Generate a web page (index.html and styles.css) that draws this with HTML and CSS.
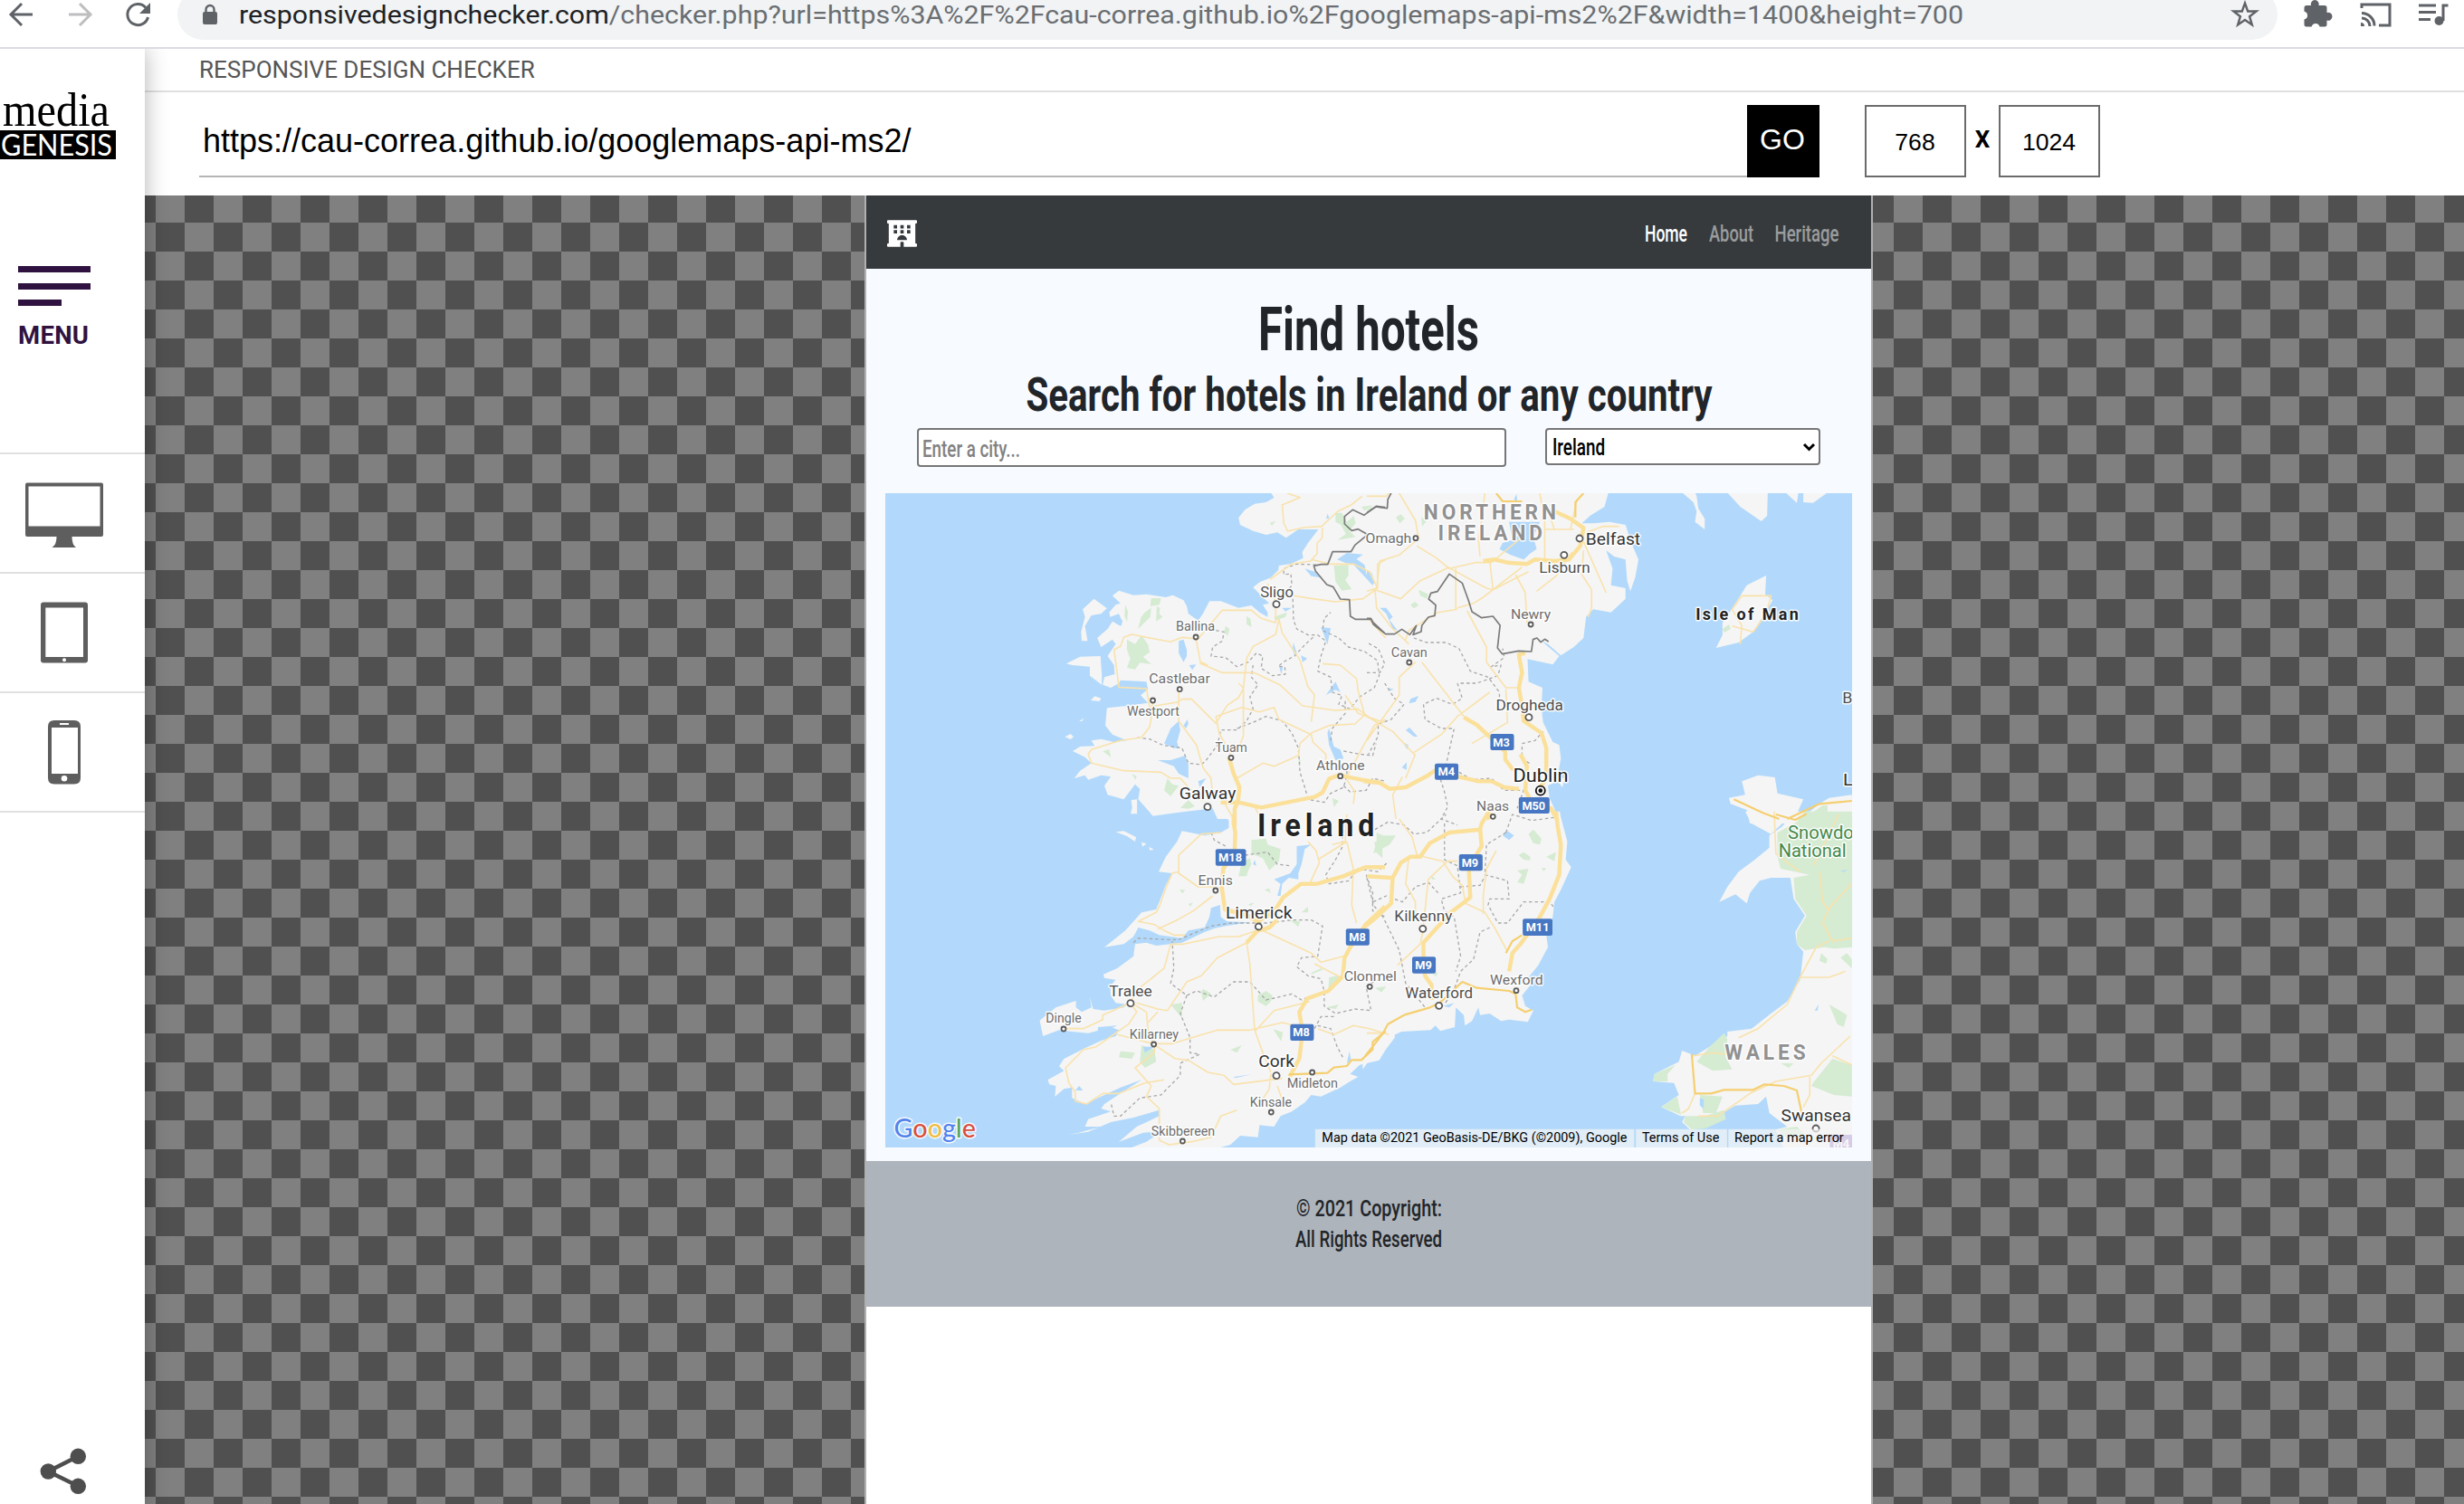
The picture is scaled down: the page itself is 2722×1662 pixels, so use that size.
FILE: index.html
```html
<!DOCTYPE html>
<html lang="en">
<head>
<meta charset="utf-8">
<title>Responsive Design Checker</title>
<link rel="stylesheet" href="styles.css">
</head>
<body>
<header class="browser">
  <svg class="nav-icons" width="196" height="52" fill="none" stroke="#5f6368" stroke-width="3">
    <path d="M36 16H13M24 4L12 16l12 12"/>
    <path stroke="#bdbec0" d="M76 16h23M88 4l12 12-12 12"/>
    <path d="M161 8.500A11.500 11.500 0 1 0 163.500 19"/>
    <path fill="#5f6368" stroke="none" d="M166 3v12h-12z"/>
  </svg>
  <div class="omnibox">
    <svg class="lock" width="18" height="24" viewBox="0 0 18 24"><path d="M4.500 10V6.500a4.500 4.500 0 0 1 9 0V10" fill="none" stroke="#5f6368" stroke-width="2.400"/><rect x="1" y="9" width="16" height="14" rx="2" fill="#5f6368"/></svg>
    <svg class="address" width="1906" height="44"><text y="26" textLength="1905" lengthAdjust="spacingAndGlyphs">responsivedesignchecker.com<tspan class="path">/checker.php?url=https%3A%2F%2Fcau-correa.github.io%2Fgooglemaps-api-ms2%2F&amp;width=1400&amp;height=700</tspan></text></svg>
    <svg class="star" width="32" height="32" viewBox="0 0 32 32"><path d="M16 3.500l3.200 9h9.300l-7.400 5.700 2.700 9.200L16 22l-7.800 5.400 2.700-9.200-7.400-5.700h9.300z" fill="none" stroke="#5f6368" stroke-width="2.400"/></svg>
  </div>
  <svg class="tools" width="206" height="52" fill="#5f6368">
    <path d="M32 6h5a4.500 4.500 0 1 1 8.500 0H52a2.500 2.500 0 0 1 2.500 2.500V14a4.500 4.500 0 1 1 0 8.500V27a2.500 2.500 0 0 1-2.500 2.500h-5.500a4.500 4.500 0 0 0-8.800 0H32a2.500 2.500 0 0 1-2.500-2.500v-5.500a4.500 4.500 0 0 0 0-8.800V8.500A2.500 2.500 0 0 1 32 6z"/>
    <g fill="none" stroke="#5f6368" stroke-width="3"><path d="M93 9V5h31v23h-12M93 14.500a14 14 0 0 1 14 14M93 20a9 9 0 0 1 9 9"/><path d="M156 6h19M156 13.500h19M156 21.500h13M183 23V6h5.500"/></g>
    <path d="M92 25a4 4 0 0 1 4 4h-4z"/><circle cx="178.500" cy="23" r="5"/>
  </svg>
</header>

<div class="app">
  <aside class="sidebar">
    <div class="logo">
      <svg class="media" width="128" height="42"><text x="3" y="37" textLength="118" lengthAdjust="spacingAndGlyphs">media</text></svg>
      <svg class="genesis" width="128" height="32"><text x="1" y="27.500" textLength="123" lengthAdjust="spacingAndGlyphs">GENESIS</text></svg>
    </div>
    <div class="menu"><i></i><i></i><i class="short"></i><span>MENU</span></div>
    <div class="device"><svg width="160" height="130"><path fill-rule="evenodd" d="M30 31.500h82q2 0 2 2V89q0 2-2 2H79.500q0 9 4.500 12H57.500q5-3 5-12H30q-2 0-2-2V33.500q0-2 2-2zM31.500 35.500v44h79v-44z"/></svg></div>
    <div class="device"><svg width="160" height="130"><path fill-rule="evenodd" d="M48 31.500h46q3 0 3 3v61q0 3-3 3H48q-3 0-3-3v-61q0-3 3-3zM50.300 37.500v54.500h41.700V37.500z"/><circle cx="71" cy="95.200" r="2" fill="#fff"/></svg></div>
    <div class="device"><svg width="160" height="130"><path fill-rule="evenodd" d="M60 30h22q7 0 7 7v56.500q0 7-7 7H60q-7 0-7-7V37q0-7 7-7zM57 38v51h29V38z"/><rect x="66" y="33" width="10" height="2" fill="#fff"/><circle cx="71" cy="94.300" r="3.300" fill="#fff"/></svg></div>
    <div class="share"><svg width="160" height="60" fill="#4e4e4e"><path d="M86.300 12.300l-33 16.700 33 16.300" fill="none" stroke="#4e4e4e" stroke-width="4.600"/><circle cx="53.300" cy="29" r="8.700"/><circle cx="86.300" cy="12.300" r="8.700"/><circle cx="86.300" cy="45.300" r="8.700"/></svg></div>
  </aside>

  <main class="main">
    <div class="title">RESPONSIVE DESIGN CHECKER</div>
    <div class="bar">
      <div class="url">https://cau-correa.github.io/googlemaps-api-ms2/</div>
      <div class="go">GO</div>
      <div class="dim">768</div><b class="by">X</b><div class="dim">1024</div>
    </div>
    <div class="stage">
      <div class="frame">
        <nav class="navbar">
          <svg class="hotel" width="33" height="30" viewBox="0 0 576 512" fill="#fff" fill-rule="evenodd"><path d="M560 64c9 0 16-7 16-16V16c0-9-7-16-16-16H16C7 0 0 7 0 16v32c0 9 7 16 16 16h16v384H16c-9 0-16 7-16 16v32c0 9 7 16 16 16h240v-80c0-9 7-16 16-16h32c9 0 16 7 16 16v80h240c9 0 16-7 16-16v-32c0-9-7-16-16-16h-16V64zM128 96h64v64h-64zM256 96h64v64h-64zM384 96h64v64h-64zM128 192h64v64h-64zM256 192h64v64h-64zM384 192h64v64h-64zM192 384a96 96 0 0 1 192 0z"/></svg>
          <svg class="narrow on" width="47" height="81"><text y="51" textLength="47" lengthAdjust="spacingAndGlyphs">Home</text></svg>
          <svg class="narrow" width="49" height="81"><text y="51" textLength="49" lengthAdjust="spacingAndGlyphs">About</text></svg>
          <svg class="narrow" width="71" height="81"><text x="-.5" y="51" textLength="71" lengthAdjust="spacingAndGlyphs">Heritage</text></svg>
        </nav>
        <section class="content">
          <h1><svg width="1110" height="110"><text x="433" y="89.500" textLength="244" lengthAdjust="spacingAndGlyphs">Find hotels</text></svg></h1>
          <h2><svg width="1110" height="66"><text x="176.500" y="46.500" textLength="758" lengthAdjust="spacingAndGlyphs">Search for hotels in Ireland or any country</text></svg></h2>
          <div class="form">
            <div class="city"><svg width="640" height="39"><text x="4" y="29.500" textLength="108" lengthAdjust="spacingAndGlyphs">Enter a city...</text></svg></div>
            <div class="country"><svg width="300" height="36"><text x="6" y="28.300" textLength="58" lengthAdjust="spacingAndGlyphs">Ireland</text><path d="M284 16l5.500 5.500L295 16" fill="none" stroke="#000" stroke-width="3"/></svg></div>
          </div>
          <svg class="map" width="1068" height="723" viewBox="978 545 1068 723">
            <defs>
              <ellipse id="t" rx="7" ry="7.500"/>
              <ellipse id="c" rx="10" ry="10.500"/>
            </defs>
            <rect x="978" y="545" width="1068" height="723" fill="#b2d9fb"/>
            <g transform="translate(970 535) scale(.357143 .333333)">
              <g class="land">
                <path d="M1215 28l10 17-25 15-35 5-30 20-20 27 5 23 40 20 40 13 35-8 27 18 38-28h30l32 0-32 45-18 30 3 20-40 20-35 5-2 15-23 25-35 15-20 17 25 28 25 25-20 5 15 25v15l-25-15-25-23-40 8-55-22h-35l-20 42-15 22-30-22-5-25-10-20-33-17-22 7-60-10-40 3-45-15-20 17 25 25-15 5-20 25 3 15 27-10 10 25-5 15-25-15-15 25-32 30 12 30 35-25 10 15-25 40 20 30 2 30-32 10-5 25 25 10 25-15 5-10 80 5 5 25-23 20 23 25-65 10-62 7-5 58 22 30 45 20-40 5-40-10-30 5 10 18-45 2-23 15 38 20 20 20-35 25-18 25 33-10 10 15 40-15 30 5-20 30 10 30 50 15 35-50 15 15-5 35 45 55 70-10 115-15 15 35H1560V28z"/>
                <path d="M668 380l40 32-18 18-30 5-20 35 8 50h-18l-2-30 12-50-7-25zM582 595l43-23 63-2 4 60v35l-37-30v-30l-55-5zM658 717l12-14 20 7-5 10zM578 838l17-10 10 10-10 8zM783 1048l18-3v48h-20l5-20zM622 785l15-9-6 10z"/>
                <path transform="translate(0 1095)" d="M1060-10l25 30v25l-25 15-50 10-20-5-50-10-15 35-35 50-22 50 42 5-20 40-20 55-10 25-45 10-25 30-25 30-65 55 60-10 30-25 15-30 35 10 30 15 70 10 20-25 50-10 15-35 5-30 28-10 2 40 20 15 70 3-75 12-35 8-30 12-70 35-35 5-45 5-30-10-35 5-5 40-50 40-43 20 3 12 35 6-17 22 2 30 15 25 35 5-10 10-60 10-35-5-10-40 5 35-30 15-18-15v-22l-62 22-50 43 10 52 50-20 40 5 50 5 70-20 25 10-10 20-45 15-50 25-65 35-15 25 15 15-50 30 5 15 20 5-3 35 28-25 25-5v35l40 20 60-30 50-25 65-25-65 45-50 35-10 15 30 10-70 25-10 25 50 0-70 20-33 7 63-10 70-32 70-15 80-25v20l-70 35-55 50 75-30 60-5-50 35-60 25h270l50-15 30-30 55 5 5-40 45 5 20-35 35-15 40-30 20-25 30 5 60-30 30-20 25-15-25-10 30-30 60-15 20-35 28-40V-10z"/>
                <path transform="translate(0 1095)" d="M735 58l25-3 38 20-3 15-25-18zM815 92l15 5-12 10zM838 108l15 8-12 3z"/>
                <g transform="translate(1512 0)">
                  <path d="M-10 28H747l-12 47-45 30-25 25 35 0 50-5 50 10 20 65 20 50-10 60-15 45-10-35-5-70-35-10-25-20 20 60-5 55 45 10v35l-45 45-55-10-22 25-8 70-30 30-40 28-40-38-20-10 55 50-20 28-78-18 3 75 43 20-3 65 5 50 30 65 20 10 5 45-10 60 22 5-7 30-15-20-30 15 5 40 25 60v20H-10z"/>
                  <path d="M975 28l35 32 10 30-5 35 30 25v-35l-20-35-5-40-5-12zM1115 28l40 47 65 48 18-18 2-77zM1295 28l35 34 5-34zM1350 28v32l30 2 45-34zM1235 303l-3 62 23 20-25 45-35 60-45 35-70 18 20-43v-40l25-40 30-50 20-35zM1120 1040l50-10-10-45 50-20 52 7 8 53 80 20-25 60-20 20h-120l-10-45-50-20zM1500 1030l-70 10-30 20-70 60h172z"/>
                </g>
                <g transform="translate(1512 1095)">
                  <path d="M-10-10H597l3 20 20 80-5 60 17 25-32 75-20 40-5 50-20 60 5 40-30 60-30 40 10 20-30 40 10 35 25 15-17 38-58-8-25 5-35-25-30 5-5-25-20 45-22 15-3-35-25-25-3 65-45 13-15-18-15 15-90 5-50 25-25 15 25 10-15 35-35 10-20 30z"/>
                  <path d="M1170-10l20 40 60 35 40-40 20-35zM1325-10l-40 50-40 30v40l-45 40-50 40-35 50-25 50 50-25 35 30 10-35 30-40 35-10h60l10 70 35 55-30 55 5 40 20 25-10 95-40 70-50 40-60 50-75 10v15l-55 35-45 30-40-17-10 37-75 40-5 25 65 5 15 40-55 40 60 30h15l-10 20 25 25 110-35-10-20 40-25 70-5 25-25 10 55 55 45-35 10 25 65h212V-10z"/>
                </g>
              </g>
              <!-- parks and forests -->
              <g class="park">
                <path d="M845 378l30 0-5 22-28 5zM765 400l8 22-3 35-8-20zM825 425l20-15-3 30-38 40 10-40zM862 405l10 5-2 20 10 10-20 15zM770 515l25 15 20-28 20 30 5 25-20 15 25 25-35-5-15 22-25-5 10-30-10-30zM1140 437l12 10 3 27-15-10zM1075 470l12 10-5 22-12-10zM1225 440l40-15-5 15-30 12zM1410 270l45-2 0 35-10 15 20 30-30 5-20-30zM1415 95l20 0 15 30 22-20 5 25-20 25 20 20-55 10 25-20-15-30-17-10zM695 885l20-5 5 25zM895 975l15 20 20 5-25 35-20-20zM935 1073l25-25 20 20-20 8zM1405 1040l20 10-15 20zM785 960l15 8-4 12zM1495 75l35-5-25 18zM1300 885l8 40-6 10zM1212 128l18-5-12 15z"/>
                <path transform="translate(0 1095)" d="M1140 165l-10-10 20-10 5 20-10 20-5 20-25 0 10-45zM1155 85l45-5 5 20 40 15-5 40-30 30-20-40-35-15zM1195 250l15-5 5 15zM1270 250l12 7-12 8zM1275 350l30 5-5 18zM1310 325l20-20 0 20zM1395 540l25-5 15 15-30 30h-12zM1175 600l25-15 20 15-5 20-15 15-25-15zM905 630l35-5 0 50zM1000 590l5-12 25 15-25 25zM745 805l5-20 45 5-10 20zM815 765l40 15 5 40-35 20-15-20zM1222 712l30 10-5 30zM1090 780l35-15-15 25zM1385 640l40-10-10 15zM1340 525l30-15 5 5-35 15zM1535 90l25 5 0 50-20-20zM932 250l18 0-8 12zM960 297l14-5-8 14zM1145 298l18-6-10 12z"/>
                <g transform="translate(1512 0)"><path d="M90 110l15-10 12 15-15 15zM168 110l18 10-15 20zM160 350l30 15-5 15-20-10zM135 400l15-10 10 12-15 10zM0 85l15-10 5 8-18 8zM1100 480l20-15 5 15-20 12zM1350 1110l60-45 15 0 0 45z"/></g>
                <g transform="translate(1512 1095)"><path d="M500 65l15-15 25 30-5 20-20-5zM470 135l15-10 20 15 0 12-20-2zM465 185l35-5-15 50-20-5 15-25zM555 140l30-15-5 30zM540 178l15 0-8 10zM30 60l20 10 40 0-20 30-50 30 10-40zM198 200l15 15-12 0zM25 575l35-5-15 20zM205 530l15-8-5 15zM1355-10h150V440l-60 5-30-5-60 10-25-20 0-40 30-55-35-55-5-70 50-10-90-20-10-40 0-80 60-35zM1060 770l45-45 10 20-5 60 20 40-60 5-50-30zM890 860l65-30-25 30 0 25-45 0zM910 970l50-35 12 60zM1380 890l60-80 60 20v105l-55-5-70-30zM1430 630l25 15 30 20-10 40-20-10zM1405 460l20 20-5 15-20-10zM1465 475l20-15 15 20 0 30zM985 1000l60 0 60-20 5 30-60 30-45 5-25-25zM1030 930l70 5-20 55-40 0zM1270 1045l60-10 30 30-60 10zM1280 825l40 0-15 15z"/></g>
              </g>
              <!-- lakes and inlets -->
              <g class="lake">
                <path d="M930 520l15-5 10 35 0 20-10 20-15-30zM962 600l22-2-12 18zM1370 475l30 2-10 55-10-30zM1285 525l10 35-5 10-8-20zM1308 568l20 10-15 12zM1385 700l30-45 15 35-15-8zM1420 250l30-22 50 5-20 15 25 20 5 30 25 20-5 18-30-35-30-35-25-5zM1320 280l30 10 20 20-30-5zM885 860l20-50 25-25 5 30-10 40 5 20-15 0zM865 915l40 0 45-15 10 30 0 45-30-15-15-25zM1395 810l15 60 20 10 10 30-25 5-20-50-5-40zM945 800l12-20 3 15-8 15zM1390 98l6 15-10 2zM1250 410l30 0-20 12zM1240 600l12 10-5 20zM735 445l18 25 3-20zM990 985l25-10-20 30z"/>
                <path transform="translate(0 1095)" d="M1295 105l45-5-20 15-10 50-10 30 0 20-30-5-20 20-5 40-10 0 10-40-20-15 50-20 20-30zM820 770l35 0-30 20zM1160 165l5-15 5 20zM610 915l12-15 12 15zM1100 870l55-8-50 12zM680 705l60-5-60 30zM1450 825l8-40 5 30z"/>
                <g transform="translate(1512 0)"><path d="M410 215l10-20 30-10-10-60 95 0-20 50 10 40-20 15-20 20-40-15zM455 50l8-18 2 25zM0 285l15 10 10 35-15-5-10-25zM40 410l20 0 20 30-10 10 25 35-15-5-20-50zM65 675l18 5-10 5zM135 712l25-10-10 20-20 5zM120 815l12-8 25 30-12 0zM110 855l18 10-3 15zM108 940l15-18 0 25z"/></g>
                <g transform="translate(1512 1095)"><path d="M420 70l15-15 20 15-15 15zM235 635l35-10-15 15zM1030 940l12 5 0 30-12-10zM1385 650l12-20-3 20zM1465 187l22-4-12 8z"/></g>
              </g>
              <!-- county lines -->
              <g class="county">
                <path d="M1355 267l-60-2-40 15 0 20 22-3 3 40-15 15M1283 380l2 70 10 30 35 20 30 0 25 20-15 50-10 50 40 20 5 50 30 10-10 30 35 15 30-40 45-30 15-40-5-50-40-30-50-15-30-30-50-25 5-40 20-20M1045 485l25 5-5 30-30 20-5 30 45 5 35 30 35-15 25-30 20 10-5 40 35 25 40-5-2-25-20 0 15-15 35-20 30-35 30-30M1160 600l-5 40 20 25-25 40 10 40-20 40-30 30-50 0-10 50-35 50-15 15-40-5-20-50-60-10-40-20-40-5M1110 810l50-20 40-20 50 15 30 40 20 50 5 80 15 50 10 40 50 10 20-30 40-20 10-40 0-25M1400 850l5-40 40-50 0-50M1440 885l50 10 40 5 10-40M1440 1000l20 20 50-5 20-40 40 10"/>
                <path transform="translate(0 1095)" d="M1030 60l10 25 35 20M1135 135l70-10 30 40 40 5M1340 0l-10 60M1440 30l-5 80-20 40-30 50 10 30 60-10 30-40 60 10 30-30M1510 200l20 60 0 60 40 20M790 425l15-15 90 5 35 0 100-45 60-10h110l80-10h60l35 20-15 100-50 5-15 30 35 30 40 10 10 40 0 50 35 25 60-15 50 5-10-50-5-30 30-20h60M1345 600l-35 15-30-20-80 20-50-60-50 0-60 50-55-20-30 15-50-40 10-50-5-90M955 600l-20 60 30 80 0 50 30 5-60 30 0 40-60 65-65 10-60 60-20 0-10-45M1360 700l40 10 20 60 20 40M1350 710l20-40 40 0"/>
                <g transform="translate(1512 0)"><path d="M0 625l40 0 15-30-20-50-35-20M145 510l40 15 60 0 40 20 35 75 55 20 35 50 0 20M280 660l15 50-30 20-50-20-40 20 5 50 50 30 40 0-25 120-20 40 15 50 10 50-20 40 50 20M55 660l30 50 30 20-40 50-40 15 0 40-30 60M290 660l50 0 65-25 10-35-30 5 40-30-5-30M480 860l40-10 25-30M480 870l0 40 30 20M285 955l40 25 60-5 40 40 60 0-20 60M0 980l35 10"/></g>
                <g transform="translate(1512 1095)"><path d="M25 50l40-25 50 10 30 30 40-5 60-60M240 30l0 120 40 20 10 90-60 20 10 40 30 20 20 130-15 50M0 210l20 90 30 40 50 110 20 110 60 80M20 290l40-20 50 20 40-50 40-15 30 35M430 60l-60 40-5 100 70 20 5 60-60 0-5 20 30 60 30 0 50-70 80 0 15 20M380 375l-30 15-20 90-40 40-20 60-30 50M290 240l60-5 15-30M430 60l20-60 60 20 70-10"/></g>
              </g>
              <!-- regional roads -->
              <g class="road">
                <path d="M1265 30l40 14-55 25 5 60 12 27 50-12 55-4 50-50 40-20 35-30M1375 145l-2 35-15 15 0 35-20 25-60 10-65 50M1340 250l60 15h70l50 25 25 55-45 35-85 10-70-10-60-10M1545 345v-80l25-15M1205 330l25 60 0 70-45-15-30-27h-90l-40 50-35 45-50-5-35 15-50-10-70-15-25 10-10 30-20 10 15 125 85 5 10 60 85-15 15-10 30 0 75 80 35-60 35-25 15-30 10-100 20-40 70-40 10-50 10 45 55 90 25 90 20 25-10 90M983 510l15 85 65 30h100l80 40 70 70 100 15 70-5 60 45M1000 590l20 10M930 690l0 95 55 80 20 75 25 35 5 60M850 715l-5 60-5 30-25 35-65 10-90 30-10 15 10 30 100 25 115 5 30 20 30 0 25 30 45 45M1115 660l15 15v160l-20 55M1045 770l80-30 55 15 45-15 15 40 100 50 5 25 40 40 0 30M1045 770l10 55 35 70M1110 975l80-50 35 10 75-35 5-40 35-35 55-25 80-5 30-30-20-80-5-40-50-45-55-5M1450 970l85-170 35-20M1445 700l40 60 80 30M1520 450l50 60M1070 1055l30 55M1165 1070l20 40M1450 980l25 40-5 40"/>
                <path transform="translate(0 1095)" d="M1060 60l-60 5-70 70v60l60 45 50 0M930 190l-20 5-20 50-20 60-10 20-55 30 50 10 30 20 30 15 35 0M865 380l60-30 50-30 60-50M905 430h40l110-25 60 0 70-25M905 430l-20 80-70 60-35 50M1180 380l160 80 30 30 70-20M1350 495l90 50M1140 425l10 70 15 220 20 60 30 80M1140 425l-90 50-50 60-45 20-60 95-30-5-65-20M780 625l20 30-25 40-100 75-40 10-55 60 10 50 20 30 0 30 35 10 50-35 50 0 80-35 60-10M780 625l-85 40 0 15-60 30-60 0M785 625l45 30 5 60 15 45 70 50 40 5 60 40 50 10 30 30 150-20M740 730l110 30h60l60-20 80-25 100 0 100-25 60 15M835 690l30-35M855 765l0 25-60 50 50 60-15 35 40 40 0 105 30 15 70-10 60-15 30-70 50-20M1165 720l60-70 110-30M1215 860l-5 50-30 50M1360 710l50 20 60-30 50 10 60 20M1405 100l40-10 5-90M1450 90l20 90-5 120 15 60M1330 90l25 30 10 40-30 70M1360 150l90-60M1255 960l-20-60"/>
                <g transform="translate(1512 0)"><path d="M0 40l60 0 10-10M100 30l50 90 10 60-60 55-60 20-10 90-30 10M155 205l60 40 40 35 80-20 50 0 90-80M255 275l-90 45-60 60-80-30 5 60 50 70 50 50M250 275l120 70 20 5 110-60M275 280v135M280 415l-60 10-90 60-10 30M150 590l-50 50 0 60-60 90-40 60M170 590l130 180M280 410l50-15 30-20 120-100M310 420l60 120 0 50 60 85h45M430 680l5 110-110 70M380 690l-100 80-50 60-85 60M0 770l80 50 70 80M150 895l-30 80M350 240l-5-60 10-60 10-90M380 250l10 100M460 300l30 60 5 100M525 355l60-50 50-80M550 150l80 0 20-100M535 30l15 90 0 130M555 70l25 80 60 0M670 220l-5 80 30 50 0 60-10 30M670 190l70 170M680 160l50-20 50 0M1130 470l65 20 40-60 15-60-30 0-60 0-30 45 30 55-5 60M90 1110l-10-80 30-60"/></g>
                <g transform="translate(1512 1095)"><path d="M100 15l40 60 15 60 80 20 30 50 30 30 10 60 60 30 30 50 40 80M280 155l-30 0-60 60-15 150M175 380l-10 50-70 70M130 140l-10 90 30 60 0 40M400 120l-30 60-10 90 0 60M0 725l50 0M1260-10l5 140 75 60M1460 0l-80 170M1400 190l10 100 20 30M1500 230l-70 80-20 50 30 60 60-10M1430 420l-40 20-50 100-40 90-90 80-60 30M1340 540l90 0 50-20M1110 795l-40-5-60 10M1015 925l-20 50-20 15M1025 1000l60 0 100-75 80-40 110-20 30-40 90-90M1370 870l0 60-20 40M1440 800l60 30"/></g>
              </g>
              <!-- motorways -->
              <g class="mway">
                <path d="M1085 905l15 55 18 45-5 50-10 20v60M1115 1055l70 17 95-20 70-15 25-15 20-45 30-12 70 15 60 10M1060 1055h55"/>
                <path transform="translate(0 1095)" d="M1100 0v30l5 30-2 60-35 60-5 60 10 75 70 20 30 20 50-30 30-50 55-45 50 0 80-25 70-30h60M1140 425l35-40 35-10 25-25M1568 305l-60 60-50 80-15 30-5 60-45 50-65 25-25 45 10 65-10 90-30 60"/>
                <g transform="translate(1512 0)"><path d="M-10 985l50 5 30 20 50-5 70-40 20-15 75 20 60 15h40l40 20 45 5M300 773l40 25 60 60 28 30 0 25 25 35M580 90l50 25 40 30-10 60-35 45-45 5-60-5-25 15-60-5-40-10-35 5M490 560l-20 5 10 60-10 50 10 60 5 50 55 40 15 50 0 100-25 40M475 895l20 40-5 80 20 40 60 20 20 40M390 1095l-20 15"/></g>
                <g transform="translate(1512 1095)"><path d="M390-30l-35 60-5 20-95 10-60 35-30 45-30 0-30 20-20 40-5 10-80-5M80 205l-5 90-50 50-35 30M350 45l5 60-40 70 5 100-60 50-60 70-25 30 0 40 5 70 20 30 0 50M585-10l5 50 10 60-5 100-30 80-30 60-60 90-25 30-10 60"/></g>
              </g>
              <g class="trunk">
                <path transform="translate(0 1095)" d="M1270 862l120-5 20-18 40-5 15-20h30l35-35 0-25 40-35"/>
                <path transform="translate(1512 1095)" d="M-5 800l30-40 25-35 15-30 50-30 80-25 30-15 70-70 45 20 100 10 20 10 5 45 25 15 20-8M1005 795l10 130 50 0 40-12 90 0 35-18 60 5 40 15 15 75M480 400l-30 20-20 40M1265 0l60 18 35-20"/>
                <path transform="translate(1512 0)" d="M1135 1045l30 15 60 30 50 20M1300 1110l100-50 100-10M400 30l20 27h60M645 110l0-50 25-30"/>
              </g>
              <!-- state border -->
              <g class="border">
                <path d="M1568 77l-27-4-38 30-35-18-25 22 0 25 22 22 20-5 30 18-40 35-12 22h-45l-12 0-15 42h-20l-23 5 5 17 35 45 20 8 22 40 28 2 3 55 15 10h50l5 10 35 35"/>
                <path transform="translate(1512 0)" d="M75 30l-10 20-2 30-35-5-28 20M0 445l12 0 8 20 38 32 28 0 22-16 25 18 20-30-10 30 25-10 2-20 20-28 20-5 3-35-22-20 7-20 20-5 37-58 40 30 20 60 10 35 30 20 35-5 22 30-8 75 15 20 50-10 40 2 5-40 12-5 12 14 12-10 12 8"/>
              </g>
              <!-- places -->
              <g class="dots">
                <use href="#c" x="1232" y="398"/><use href="#t" x="983" y="507"/><use href="#t" x="933" y="680"/><use href="#t" x="850" y="717"/><use href="#t" x="1092" y="907"/><use href="#t" x="1430" y="968"/><use href="#c" x="1019" y="1070"/>
                <g transform="translate(0 1095)"><use href="#t" x="1044" y="252"/><use href="#c" x="1177" y="372"/><use href="#c" x="781" y="626"/><use href="#t" x="574" y="711"/><use href="#t" x="853" y="762"/><use href="#c" x="1232" y="866"/><use href="#t" x="1343" y="855"/><use href="#t" x="1216" y="987"/><use href="#t" x="942" y="1083"/><use href="#t" x="1521" y="571"/></g>
                <g transform="translate(1512 0)"><use href="#t" x="151" y="179"/><use href="#c" x="658" y="180"/><use href="#c" x="610" y="235"/><use href="#t" x="507" y="465"/><use href="#t" x="131" y="591"/><use href="#c" x="501" y="773"/><use href="#t" x="390" y="1102"/><g stroke="#111"><ellipse cx="537" cy="1016" rx="14" ry="15"/><ellipse cx="537" cy="1016" rx="4" ry="4.500" fill="#111"/></g></g>
                <g transform="translate(1512 1095)"><use href="#c" x="173" y="379"/><use href="#c" x="223" y="634"/><use href="#t" x="462" y="584"/><use href="#c" x="1389" y="1041"/></g>
              </g>
              <g class="names">
                <text class="m" x="1182" y="376" textLength="103" lengthAdjust="spacingAndGlyphs">Sligo</text>
                <text x="921" y="487" textLength="121" lengthAdjust="spacingAndGlyphs">Ballina</text>
                <text x="838" y="660" textLength="189" lengthAdjust="spacingAndGlyphs">Castlebar</text>
                <text x="770" y="767" textLength="162" lengthAdjust="spacingAndGlyphs">Westport</text>
                <text x="1043" y="888" textLength="99" lengthAdjust="spacingAndGlyphs">Tuam</text>
                <text x="1355" y="948" textLength="150" lengthAdjust="spacingAndGlyphs">Athlone</text>
                <text class="l" x="932" y="1043" textLength="175" lengthAdjust="spacingAndGlyphs">Galway</text>
                <text class="country-name" x="1173" y="1168" textLength="376" lengthAdjust="spacingAndGlyphs">Ireland</text>
                <g transform="translate(0 1095)">
                  <text x="990" y="233" textLength="107" lengthAdjust="spacingAndGlyphs">Ennis</text>
                  <text class="l" x="1075" y="346" textLength="206" lengthAdjust="spacingAndGlyphs">Limerick</text>
                  <text class="m" x="715" y="603" textLength="133" lengthAdjust="spacingAndGlyphs">Tralee</text>
                  <text x="519" y="691" textLength="110" lengthAdjust="spacingAndGlyphs">Dingle</text>
                  <text x="778" y="744" textLength="152" lengthAdjust="spacingAndGlyphs">Killarney</text>
                  <text class="l" x="1177" y="838" textLength="111" lengthAdjust="spacingAndGlyphs">Cork</text>
                  <text x="1265" y="906" textLength="157" lengthAdjust="spacingAndGlyphs">Midleton</text>
                  <text x="1150" y="969" textLength="130" lengthAdjust="spacingAndGlyphs">Kinsale</text>
                  <text x="845" y="1064" textLength="197" lengthAdjust="spacingAndGlyphs">Skibbereen</text>
                  <text x="1441" y="551" textLength="163" lengthAdjust="spacingAndGlyphs">Clonmel</text>
                </g>
                <g transform="translate(1512 0)">
                  <text x="-4" y="196" textLength="142" lengthAdjust="spacingAndGlyphs">Omagh</text>
                  <text class="region" x="176" y="117" textLength="420" lengthAdjust="spacingAndGlyphs">NORTHERN</text>
                  <text class="region" x="220" y="187" textLength="334" lengthAdjust="spacingAndGlyphs">IRELAND</text>
                  <text class="l" x="677" y="200" textLength="169" lengthAdjust="spacingAndGlyphs">Belfast</text>
                  <text class="m" x="533" y="295" textLength="158" lengthAdjust="spacingAndGlyphs">Lisburn</text>
                  <text x="445" y="446" textLength="124" lengthAdjust="spacingAndGlyphs">Newry</text>
                  <text x="75" y="573" textLength="112" lengthAdjust="spacingAndGlyphs">Cavan</text>
                  <text class="isle" x="1017" y="449" textLength="325" lengthAdjust="spacingAndGlyphs">Isle of Man</text>
                  <text class="m" x="399" y="750" textLength="208" lengthAdjust="spacingAndGlyphs">Drogheda</text>
                  <text class="xl" x="452" y="986" textLength="171" lengthAdjust="spacingAndGlyphs">Dublin</text>
                  <text x="339" y="1083" textLength="101" lengthAdjust="spacingAndGlyphs">Naas</text>
                  <text class="m" x="1471" y="725">B</text><text class="l" x="1473" y="1000">L</text>
                </g>
                <g transform="translate(1512 1095)">
                  <text class="m" x="85" y="355" textLength="179" lengthAdjust="spacingAndGlyphs">Kilkenny</text>
                  <text class="m" x="118" y="610" textLength="210" lengthAdjust="spacingAndGlyphs">Waterford</text>
                  <text x="381" y="564" textLength="164" lengthAdjust="spacingAndGlyphs">Wexford</text>
                  <text class="region" x="1107" y="814" textLength="261" lengthAdjust="spacingAndGlyphs">WALES</text>
                  <text class="green" x="1302" y="80" textLength="204" lengthAdjust="spacingAndGlyphs">Snowdo</text>
                  <text class="green" x="1273" y="140" textLength="210" lengthAdjust="spacingAndGlyphs">National</text>
                  <text class="l" x="1281" y="1017" textLength="217" lengthAdjust="spacingAndGlyphs">Swansea</text>
                </g>
              </g>
              <g class="shields">
                <g transform="translate(1512 0)"><rect x="382" y="828" width="73" height="54" rx="6"/><text x="390" y="869" textLength="52" lengthAdjust="spacingAndGlyphs">M3</text><rect x="210" y="926" width="73" height="54" rx="6"/><text x="220" y="966" textLength="52" lengthAdjust="spacingAndGlyphs">M4</text><rect x="470" y="1038" width="95" height="54" rx="6"/><text x="480" y="1079" textLength="72" lengthAdjust="spacingAndGlyphs">M50</text></g>
                <g transform="translate(0 1095)"><rect x="1044" y="115" width="94" height="55" rx="6"/><text x="1053" y="156" textLength="73" lengthAdjust="spacingAndGlyphs">M18</text><rect x="1447" y="379" width="73" height="55" rx="6"/><text x="1457" y="420" textLength="52" lengthAdjust="spacingAndGlyphs">M8</text><rect x="1275" y="695" width="73" height="55" rx="6"/><text x="1283" y="736" textLength="52" lengthAdjust="spacingAndGlyphs">M8</text></g>
                <g transform="translate(1512 1095)"><rect x="285" y="132" width="73" height="55" rx="6"/><text x="293" y="173" textLength="52" lengthAdjust="spacingAndGlyphs">M9</text><rect x="140" y="472" width="73" height="55" rx="6"/><text x="149" y="513" textLength="52" lengthAdjust="spacingAndGlyphs">M9</text><rect x="482" y="346" width="92" height="56" rx="6"/><text x="492" y="387" textLength="72" lengthAdjust="spacingAndGlyphs">M11</text><rect x="1432" y="1062" width="75" height="55" rx="6" fill="#8b6bc0"/><text x="1441" y="1103" textLength="52" lengthAdjust="spacingAndGlyphs">M4</text></g>
              </g>
              <text class="google" x="49" y="2165" textLength="253" lengthAdjust="spacingAndGlyphs"><tspan fill="#5383ec">G</tspan><tspan fill="#d85140">o</tspan><tspan fill="#f1bd42">o</tspan><tspan fill="#5383ec">g</tspan><tspan fill="#58a55c">l</tspan><tspan fill="#d85140">e</tspan></text>
              <path class="legal-bg" d="M1352 2138h987v64h-987zM2344 2138h282v64h-282zM2630 2138h386v64h-386z"/>
              <g class="legal">
                <text x="1373" y="2181" textLength="944" lengthAdjust="spacingAndGlyphs">Map data ©2021 GeoBasis-DE/BKG (©2009), Google</text>
                <text x="2363" y="2181" textLength="239" lengthAdjust="spacingAndGlyphs">Terms of Use</text>
                <text x="2649" y="2181" textLength="338" lengthAdjust="spacingAndGlyphs">Report a map error</text>
              </g>
            </g>
          </svg>
        </section>
        <footer class="footer"><svg width="1110" height="161"><text x="475" y="61" textLength="161" lengthAdjust="spacingAndGlyphs">© 2021 Copyright:</text><text x="474" y="95.300" textLength="162" lengthAdjust="spacingAndGlyphs">All Rights Reserved</text></svg></footer>
      </div>
    </div>
  </main>
</div>
</body>
</html>
```
FILE: styles.css
```css
* { box-sizing: border-box; }
body {
  margin: 0;
  width: 2722px;
  height: 1662px;
  overflow: hidden;
  display: flex;
  flex-direction: column;
  background: #fff;
  font-family: Roboto, "Liberation Sans", sans-serif;
}
svg { display: block; flex: none; overflow: visible; }

.browser { display: flex; height: 54px; border-bottom: 2px solid #dadce0; flex: none; }
.omnibox {
  width: 2320px;
  height: 56px;
  margin-top: -12px;
  padding: 12px 20px 0 27px;
  border-radius: 28px;
  background: #f1f3f4;
  display: flex;
}
.lock { margin-top: 4px; }
.address { margin-left: 23px; font-size: 28px; fill: #202124; }
.address .path { fill: #6a6e72; }
.star { margin-left: 294px; }

.app { display: flex; flex: 1; min-height: 0; }
.sidebar {
  position: relative;
  width: 160px;
  flex: none;
  background: #fff;
  box-shadow: 0 0 24px rgba(0, 0, 0, .3);
  clip-path: inset(0 -30px 0 0);
  display: flex;
  flex-direction: column;
}
.logo { padding-top: 48px; height: 240px; }
.media { font: 52px "Liberation Serif", serif; }
.genesis { background: #000; fill: #fff; font: 32px Lato, sans-serif; }
.menu { height: 206px; padding-left: 20px; color: #2f1240; }
.menu i { display: block; width: 80px; height: 7px; margin-bottom: 11.5px; background: #2f1240; }
.menu .short { width: 48px; }
.menu span { display: block; margin-top: 17px; font-size: 27.500px; line-height: 32px; font-weight: 700; letter-spacing: .3px; }
.device { height: 132px; border-top: 2px solid #e0e0e0; fill: #5e5e5e; }
.device + .share { border-top: 2px solid #e0e0e0; flex: 1; padding-top: 699px; }

.main { flex: 1; display: flex; flex-direction: column; min-width: 0; }
.title {
  height: 48px;
  padding: 0 60px;
  border-bottom: 2px solid #e0e0e0;
  font-size: 26px;
  line-height: 46px;
  color: #555;
}
.bar {
  display: flex;
  height: 114px;
  padding: 14px 0 20px 60px;
  font: 26.600px/80px "Liberation Sans", Arial, sans-serif;
  color: #000;
}
.url { width: 1710px; padding-left: 4px; border-bottom: 2px solid #b5b5b5; font-size: 36px; line-height: 80px; }
.go { width: 80px; margin-right: 50px; background: #000; color: #fff; font-size: 32px; line-height: 77px; text-align: center; text-indent: -2px; }
.dim { width: 112px; border: 2px solid #6b6b6b; text-align: center; line-height: 78px; text-indent: -1px; }
.by { width: 36px; font: 700 26px/77px Roboto, sans-serif; text-align: center; }

.stage {
  flex: 1;
  min-height: 0;
  padding-left: 795px;
  background: conic-gradient(#808080 0 25%, #505050 0 50%, #808080 0 75%, #505050 0) 12px 30px / 64px 64px;
}
.frame { width: 1114px; height: 100%; border: solid #b0b0b0; border-width: 0 2px; background: #fff; }
.navbar { display: flex; gap: 24px; height: 81px; padding: 0 35px 0 23px; background: #363a3d; }
.hotel { margin: 27px auto 0 0; }
.narrow { font-size: 26.500px; font-weight: 500; fill: #9a9c9e; }
.narrow.on { fill: #fff; }
.content { height: 986px; background: #f7faff; }
h1, h2 { margin: 0; fill: #212529; }
h1 { height: 110px; font-size: 66px; }
h2 { height: 66px; font-size: 52.500px; }
.form { display: flex; gap: 43px; height: 72px; padding-left: 56px; }
.city, .country { background: #fff; border: 2px solid #767676; border-radius: 4px; font-size: 25.500px; font-weight: 500; }
.city { width: 651px; height: 43px; fill: #828282; }
.country { width: 304px; height: 41px; fill: #000; }
.footer { height: 161px; background: #aeb4bb; fill: #212529; font-size: 26.500px; font-weight: 500; }

.map { margin-left: 21px; overflow: hidden; }
.map path, .map ellipse { vector-effect: non-scaling-stroke; }
.land { fill: #f5f5f5; }
.park { fill: #d5ebd2; }
.lake { fill: #b2d9fb; }
.county, .road, .mway, .trunk, .border { fill: none; stroke-linejoin: round; }
.county { stroke: #a8a8a8; stroke-width: 1.300px; stroke-dasharray: 3.500 3; }
.road { stroke: #f9e2ac; stroke-width: 1.600px; }
.mway { stroke: #fbe09a; stroke-width: 4.500px; }
.trunk { stroke: #f5cf70; stroke-width: 2.200px; }
.border { stroke: #7b7b7b; stroke-width: 1.700px; }
.dots { fill: #fff; stroke: #5a5a5a; stroke-width: 1.800px; }
.names text, .google { paint-order: stroke; stroke: #fff; stroke-width: 9px; stroke-linejoin: round; stroke-opacity: .9; }
.names { font-size: 46px; fill: #6e6e6e; }
.names .m { font-size: 50px; fill: #4f4f4f; }
.names .l { font-size: 57px; fill: #333; }
.names .xl { font-size: 62px; fill: #222; }
.names .region { font-size: 69px; font-weight: 700; fill: #919191; letter-spacing: 12px; }
.names .isle { font-size: 53px; font-weight: 700; fill: #222; letter-spacing: 7px; }
.names .country-name { font-size: 104px; font-weight: 700; fill: #222; letter-spacing: 16px; }
.names .green { font-size: 58px; fill: #46894c; }
.shields { fill: #4777c2; }
.shields text { fill: #fff; font-size: 41px; font-weight: 700; }
.google { font: 500 84px Lato, sans-serif; }
.legal-bg { fill: #f5f5f5; opacity: .7; }
.legal { font-size: 43px; fill: #000; }
```
